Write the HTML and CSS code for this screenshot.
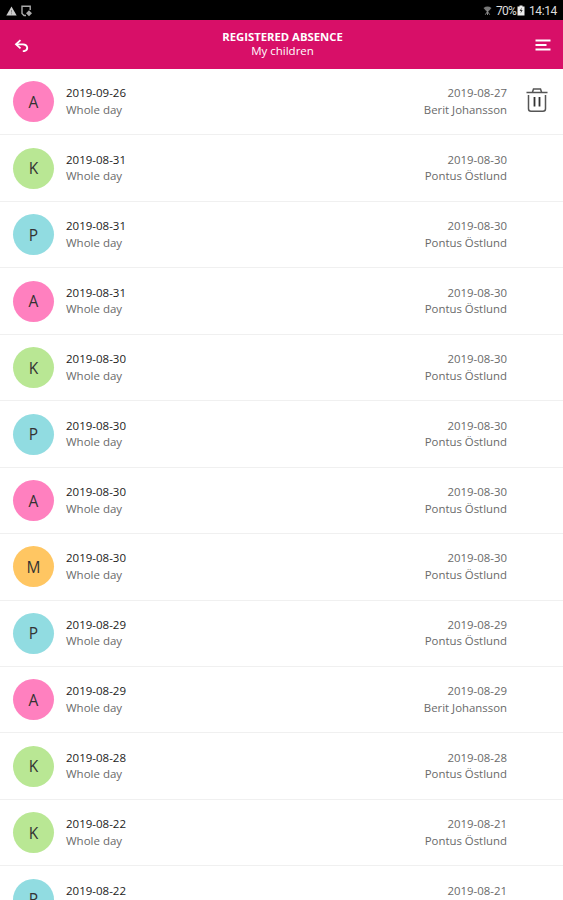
FILE: index.html
```html
<!DOCTYPE html>
<html lang="en">
<head>
    <meta charset="UTF-8">
    <meta name="viewport" content="width=device-width, initial-scale=1.0">
    <title>Registered absence</title>
    <link rel="stylesheet" href="styles.css">
</head>
<body>
    <!-- Status bar -->
    <div class="status-bar">
        <div class="status-icons">
            <svg width="11" height="10" viewBox="0 0 11 10"><path d="M5.5 0.5L10.7 9.5H0.3Z" fill="#ccc"/><path d="M5.5 4v2.5M5.5 7.3v1" stroke="#888" stroke-width="1"/></svg>
            <svg width="12" height="12" viewBox="0 0 12 12" fill="none" stroke="#aaa" stroke-width="1.4"><path d="M5 10.5H3L1 8.5V1.2H9.2V5"/><path d="M5 8.3L8 5.3L11 8.3L8 11.3Z" fill="#aaa" stroke="none"/></svg>
        </div>
        <div class="status-info">
            <svg class="wifi" width="9" height="10" viewBox="0 0 9 10"><path d="M0.5 2Q4.5 -0.8 8.5 2L4.5 6.5Z" fill="#777"/><path d="M4.5 4v5M2.3 8.7L4.5 5.5L6.7 8.7" fill="none" stroke="#888"/></svg>
            <span class="percent">70%</span>
            <svg class="battery" width="8" height="11" viewBox="0 0 8 11"><path d="M2.5 0.5H5.5V1.5H7.5V10.5H0.5V1.5H2.5Z" fill="#eee"/><path d="M4.7 2.5L2.6 6H4L3.5 8.5L5.7 5H4.3Z" fill="#333"/></svg>
            <span class="clock">14:14</span>
        </div>
    </div>

    <!-- Header -->
    <header class="header">
        <svg class="back" width="15" height="14" viewBox="0 0 15 14" fill="none" stroke="#fff" stroke-width="1.8"><path d="M6.5 1.2L2 5.3L6.5 9.4"/><path d="M2.5 5.3H9C14 5.6 14.8 10.8 10.2 12.2H8.8"/></svg>
        <div class="header-title">
            <h1>REGISTERED ABSENCE</h1>
            <p>My children</p>
        </div>
        <svg width="16" height="12" viewBox="0 0 16 12" stroke="#fff" stroke-width="2"><path d="M0.5 1.5H15.5M0.5 6H11.5M0.5 10.5H15.5"/></svg>
    </header>

    <!-- Absence list -->
    <ul class="absence-list">
        <li class="absence">
            <div class="avatar pink">A</div>
            <div class="period"><span class="date">2019-09-26</span><span>Whole day</span></div>
            <div class="reported"><span>2019-08-27</span><span>Berit Johansson</span></div>
            <svg class="trash" width="22" height="26" viewBox="0 0 22 26" fill="none" stroke="#555" stroke-width="1.5"><path d="M0.5 5.5H21.5M6.5 5L7.5 2H14.5L15.5 5"/><path d="M2.5 8V21.8Q2.5 24.3 5 24.3H17Q19.5 24.3 19.5 21.8V8"/><path d="M8.5 10V19.5M13.5 10V19.5" stroke="#333" stroke-width="1.8"/></svg>
        </li>
        <li class="absence">
            <div class="avatar green">K</div>
            <div class="period"><span class="date">2019-08-31</span><span>Whole day</span></div>
            <div class="reported"><span>2019-08-30</span><span>Pontus Östlund</span></div>
        </li>
        <li class="absence">
            <div class="avatar blue">P</div>
            <div class="period"><span class="date">2019-08-31</span><span>Whole day</span></div>
            <div class="reported"><span>2019-08-30</span><span>Pontus Östlund</span></div>
        </li>
        <li class="absence">
            <div class="avatar pink">A</div>
            <div class="period"><span class="date">2019-08-31</span><span>Whole day</span></div>
            <div class="reported"><span>2019-08-30</span><span>Pontus Östlund</span></div>
        </li>
        <li class="absence">
            <div class="avatar green">K</div>
            <div class="period"><span class="date">2019-08-30</span><span>Whole day</span></div>
            <div class="reported"><span>2019-08-30</span><span>Pontus Östlund</span></div>
        </li>
        <li class="absence">
            <div class="avatar blue">P</div>
            <div class="period"><span class="date">2019-08-30</span><span>Whole day</span></div>
            <div class="reported"><span>2019-08-30</span><span>Pontus Östlund</span></div>
        </li>
        <li class="absence">
            <div class="avatar pink">A</div>
            <div class="period"><span class="date">2019-08-30</span><span>Whole day</span></div>
            <div class="reported"><span>2019-08-30</span><span>Pontus Östlund</span></div>
        </li>
        <li class="absence">
            <div class="avatar orange">M</div>
            <div class="period"><span class="date">2019-08-30</span><span>Whole day</span></div>
            <div class="reported"><span>2019-08-30</span><span>Pontus Östlund</span></div>
        </li>
        <li class="absence">
            <div class="avatar blue">P</div>
            <div class="period"><span class="date">2019-08-29</span><span>Whole day</span></div>
            <div class="reported"><span>2019-08-29</span><span>Pontus Östlund</span></div>
        </li>
        <li class="absence">
            <div class="avatar pink">A</div>
            <div class="period"><span class="date">2019-08-29</span><span>Whole day</span></div>
            <div class="reported"><span>2019-08-29</span><span>Berit Johansson</span></div>
        </li>
        <li class="absence">
            <div class="avatar green">K</div>
            <div class="period"><span class="date">2019-08-28</span><span>Whole day</span></div>
            <div class="reported"><span>2019-08-28</span><span>Pontus Östlund</span></div>
        </li>
        <li class="absence">
            <div class="avatar green">K</div>
            <div class="period"><span class="date">2019-08-22</span><span>Whole day</span></div>
            <div class="reported"><span>2019-08-21</span><span>Pontus Östlund</span></div>
        </li>
        <li class="absence">
            <div class="avatar blue">P</div>
            <div class="period"><span class="date">2019-08-22</span><span>Whole day</span></div>
            <div class="reported"><span>2019-08-21</span><span>Pontus Östlund</span></div>
        </li>
    </ul>
</body>
</html>
```
FILE: styles.css
```css
* {
    box-sizing: border-box;
}

body {
    margin: 0;
    height: 100vh;
    overflow: hidden;
    background: #fff;
    font-family: 'Open Sans', sans-serif;
    font-size: 11.5px;
    color: #6a6a6a;
}

.status-bar {
    display: flex;
    justify-content: space-between;
    align-items: center;
    height: 20px;
    padding: 1px 7px 0 6px;
    background: #000;
    color: #ddd;
    font-family: Roboto, sans-serif;
    font-size: 12px;
}

.status-icons,
.status-info {
    display: flex;
    align-items: center;
}

.status-icons {
    gap: 4px;
}

.wifi {
    margin-right: 4px;
}

.percent {
    width: 21px;
    font-size: 12px;
    letter-spacing: -0.7px;
}

.battery {
    margin-right: 4px;
}

.clock {
    width: 27px;
    letter-spacing: -0.4px;
}

.header {
    display: flex;
    justify-content: space-between;
    align-items: center;
    height: 49px;
    padding: 0 12px 0 14px;
    background: #d80f68;
    color: #fff;
}

.back {
    margin: 2px 1px 0 0;
}

.header-title {
    padding-bottom: 2px;
    text-align: center;
    line-height: 14px;
}

.header-title h1 {
    margin: 0;
    font-size: 11.3px;
    font-weight: 700;
}

.header-title p {
    margin: 0;
    font-size: 11.5px;
}

.absence-list {
    margin: 0;
    padding: 0;
    list-style: none;
}

.absence {
    display: flex;
    align-items: center;
    height: 66.45px;
    padding: 0.4px 15px 0 13px;
    border-bottom: 1px solid #f0f0f0;
}

.avatar {
    display: flex;
    justify-content: center;
    align-items: center;
    width: 41px;
    height: 41px;
    margin-right: 12px;
    border-radius: 50%;
    color: #333;
    font-size: 15.5px;
}

.pink {
    background: #ff80bf;
}

.green {
    background: #b9e794;
}

.blue {
    background: #91dce1;
}

.orange {
    background: #ffc662;
}

.period,
.reported {
    display: flex;
    flex-direction: column;
    line-height: 16.5px;
}

.date {
    color: #222;
}

.reported {
    margin: 0 41px 0 auto;
    font-size: 11.4px;
    text-align: right;
}

.trash {
    margin: -3px 0 0 -22px;
}
```
